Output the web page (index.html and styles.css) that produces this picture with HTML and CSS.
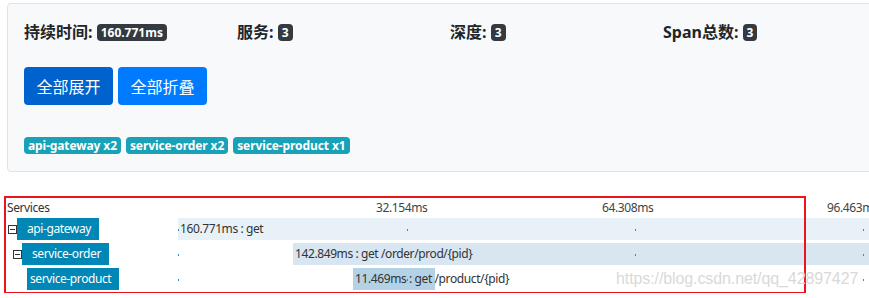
FILE: index.html
```html
<!DOCTYPE html>
<html lang="zh-CN">
<head>
    <meta charset="UTF-8">
    <meta name="viewport" content="width=device-width, initial-scale=1.0">
    <title>Trace 详情</title>
    <link rel="stylesheet" href="styles.css">
</head>
<body>
    <div class="page">
        <div class="summary">
            <div class="stats">
                <div class="stat">持续时间: <span class="badge badge-dark">160.771ms</span></div>
                <div class="stat">服务: <span class="badge badge-dark">3</span></div>
                <div class="stat">深度: <span class="badge badge-dark">3</span></div>
                <div class="stat">Span总数: <span class="badge badge-dark">3</span></div>
            </div>
            <div class="actions">
                <button type="button" class="btn btn-active">全部展开</button>
                <button type="button" class="btn">全部折叠</button>
            </div>
            <div class="tags">
                <span class="badge badge-info">api-gateway x2</span>
                <span class="badge badge-info">service-order x2</span>
                <span class="badge badge-info">service-product x1</span>
            </div>
        </div>

        <div class="trace">
            <div class="trace-head">
                <div class="svc-col">Services</div>
                <div class="axis">
                    <span class="tick-label" style="left: 198px">32.154ms</span>
                    <span class="tick-label" style="left: 424px">64.308ms</span>
                    <span class="tick-label" style="left: 649px">96.463ms</span>
                </div>
            </div>

            <div class="span-row level-0">
                <div class="svc-col">
                    <span class="toggle"></span>
                    <span class="svc">api-gateway</span>
                </div>
                <div class="track">
                    <div class="bar bar-1" style="left: 0; width: 1141px">160.771ms : get</div>
                    <i class="dot" style="left: 0"></i>
                    <i class="dot" style="left: 229px"></i>
                    <i class="dot" style="left: 457px"></i>
                    <i class="dot" style="left: 685px"></i>
                </div>
            </div>

            <div class="span-row level-1">
                <div class="svc-col">
                    <span class="toggle"></span>
                    <span class="svc">service-order</span>
                </div>
                <div class="track">
                    <div class="bar bar-2" style="left: 115px; width: 1014px">142.849ms : get /order/prod/{pid}</div>
                    <i class="dot dot-blue" style="left: 0"></i>
                    <i class="dot" style="left: 229px"></i>
                    <i class="dot" style="left: 457px"></i>
                    <i class="dot" style="left: 685px"></i>
                </div>
            </div>

            <div class="span-row level-2">
                <div class="svc-col">
                    <span class="toggle-space"></span>
                    <span class="svc">service-product</span>
                </div>
                <div class="track">
                    <div class="bar bar-3" style="left: 175px; width: 82px">11.469ms : get /product/{pid}</div>
                    <i class="dot dot-blue" style="left: 0"></i>
                    <i class="dot" style="left: 229px"></i>
                    <i class="dot" style="left: 457px"></i>
                    <i class="dot" style="left: 685px"></i>
                </div>
            </div>

            <div class="highlight"></div>
            <div class="watermark">https://blog.csdn.net/qq_42897427</div>
        </div>
    </div>
</body>
</html>
```

FILE: styles.css
```css
* {
    margin: 0;
    padding: 0;
    box-sizing: border-box;
}

body {
    font-family: "Noto Sans", "Noto Sans CJK SC", sans-serif;
    background: #ffffff;
    color: #212529;
    overflow: hidden;
}

.page {
    width: 900px;
    padding-top: 3px;
}

/* summary panel */

.summary {
    width: 886px;
    margin-left: 7px;
    padding: 16px 16px 17px;
    background: #f8f9fa;
    border: 1px solid #dfe2e6;
    border-radius: 4px;
}

.stats {
    display: flex;
    height: 24px;
    align-items: center;
}

.stat {
    width: 213px;
    font-size: 16px;
    font-weight: 700;
    line-height: 24px;
}

.badge {
    display: inline-block;
    padding: 0 4px;
    font-size: 12px;
    font-weight: 700;
    line-height: 17px;
    border-radius: 4px;
    color: #ffffff;
    vertical-align: 1px;
}

.badge-dark {
    background: #343a40;
}

.badge-info {
    background: #17a2b8;
    letter-spacing: -0.1px;
}

.actions {
    display: flex;
    gap: 5px;
    margin-top: 23px;
}

.btn {
    width: 89px;
    height: 38px;
    border: none;
    border-radius: 4px;
    background: #007bff;
    color: #ffffff;
    font-size: 16px;
    font-family: "Noto Sans CJK SC", sans-serif;
    cursor: pointer;
}

.btn-active {
    background: #0062cc;
}

.tags {
    display: flex;
    gap: 5px;
    margin-top: 32px;
}

/* trace timeline */

.trace {
    position: relative;
    margin: 26px 0 0 7px;
    font-size: 12px;
    letter-spacing: -0.4px;
    color: #333333;
}

.trace-head {
    display: flex;
    height: 20px;
    line-height: 20px;
}

.svc-col {
    flex: none;
    width: 171px;
    display: flex;
    align-items: center;
}

.axis {
    position: relative;
    flex: 1;
}

.tick-label {
    position: absolute;
    top: 0;
    color: #444444;
}

.span-row {
    display: flex;
    height: 22px;
    margin-bottom: 3px;
}

.level-0 .svc-col { padding-left: 1px; }
.level-1 .svc-col { padding-left: 6px; }
.level-2 .svc-col { padding-left: 11px; }

.toggle,
.toggle-space {
    flex: none;
    width: 9px;
    height: 9px;
}

.toggle {
    position: relative;
    border: 1px solid #333333;
    background: #ffffff;
}

.toggle::after {
    content: "";
    position: absolute;
    left: 1px;
    right: 1px;
    top: 3px;
    height: 1px;
    background: #333333;
}

.svc {
    height: 22px;
    padding: 0 8px 0 10px;
    line-height: 22px;
    background: #0087b5;
    color: #ffffff;
    white-space: nowrap;
}

.level-2 .svc {
    padding: 0 8px 0 3px;
}

.track {
    position: relative;
    flex: none;
    width: 1200px;
}

.bar {
    position: absolute;
    top: 0;
    height: 22px;
    padding-left: 2px;
    line-height: 22px;
    white-space: nowrap;
    color: #333333;
}

.bar-1 { background: #e9f1f8; }
.bar-2 { background: #d7e6f1; }
.bar-3 { background: #b4d2e6; }

.dot {
    position: absolute;
    top: 11px;
    width: 1px;
    height: 2px;
    background: #5b7f99;
}

.dot-blue {
    background: #2f8cc4;
}

.highlight {
    position: absolute;
    left: -3px;
    top: -2px;
    width: 802px;
    height: 98px;
    border: 2px solid #e8151d;
    pointer-events: none;
}

.watermark {
    position: absolute;
    left: 609px;
    top: 72px;
    font-family: "Liberation Sans", Arial, sans-serif;
    font-size: 16px;
    letter-spacing: -0.1px;
    color: #d9d9d9;
    text-shadow: 0 0 1px #ffffff;
    white-space: nowrap;
    pointer-events: none;
}
```
